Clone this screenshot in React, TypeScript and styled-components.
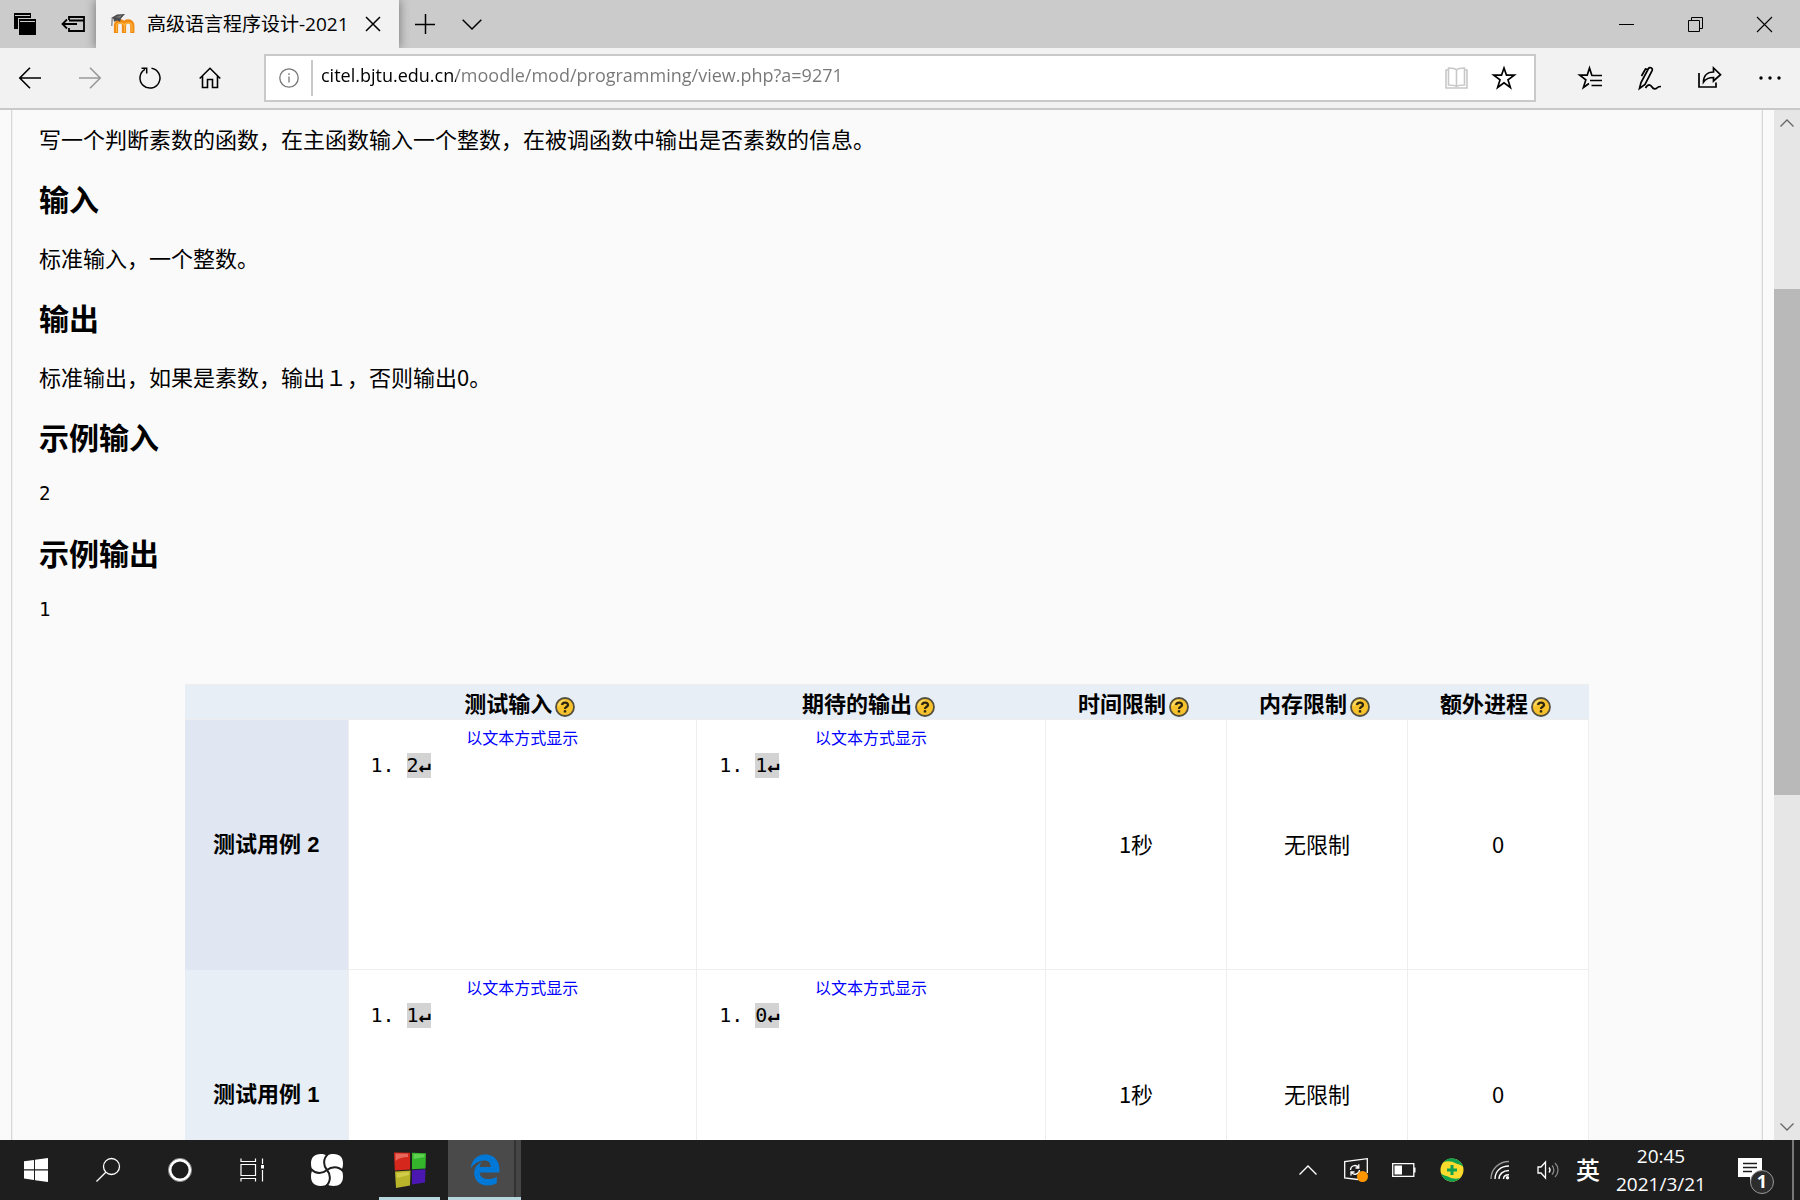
import React from 'react';
import styled, { createGlobalStyle } from 'styled-components';
import { FaEdgeLegacy } from 'react-icons/fa';

const uiFont = '"Open Sans", "Noto Sans CJK SC", sans-serif';
const textFont = '"Noto Sans CJK SC", sans-serif';
const headFont = '"Liberation Sans", "Noto Sans CJK SC", sans-serif';
const monoFont = '"DejaVu Sans Mono", "Noto Sans CJK SC", monospace';

const GlobalStyle = createGlobalStyle`
  * { box-sizing: border-box; }
  body { margin: 0; background: #fafafa; }
  button { border: 0; padding: 0; background: none; color: inherit; font: inherit; cursor: pointer; }
  svg { display: block; flex: none; overflow: visible; }
`;

const Screen = styled.div`
  display: flex;
  flex-direction: column;
  height: 100vh;
  overflow: hidden;
  font-family: ${uiFont};
  color: #000;
`;

/* ---------- tab strip ---------- */

const TabStrip = styled.header`
  display: flex;
  flex: none;
  height: 48px;
  background: #cbcbcb;
  overflow: hidden;
`;

const StripButton = styled.button<{ $width: number }>`
  display: flex;
  align-items: center;
  justify-content: center;
  width: ${(p) => p.$width}px;
  height: 48px;
`;

const Tab = styled.div`
  display: flex;
  align-items: center;
  width: 303px;
  height: 48px;
  padding: 0 12px 0 15px;
  gap: 12px;
  background: #f2f2f2;
  box-shadow: 0 0 10px rgba(0, 0, 0, 0.45);
`;

const TabTitle = styled.span`
  flex: 1;
  min-width: 0;
  overflow: hidden;
  white-space: nowrap;
  font-size: 19px;
  line-height: 28px;
`;

const CloseTab = styled.button`
  display: flex;
  align-items: center;
  justify-content: center;
  width: 28px;
  height: 28px;
  margin-left: -12px;
`;

const WindowButtons = styled.div`
  display: flex;
  margin-left: auto;
  padding-right: 1px;
`;

/* ---------- address toolbar ---------- */

const Toolbar = styled.nav`
  display: flex;
  flex: none;
  align-items: center;
  height: 62px;
  background: #f2f2f2;
  border-bottom: 2px solid #c9c9c9;
`;

const ToolButton = styled.button<{ $dim?: boolean }>`
  display: flex;
  align-items: center;
  justify-content: center;
  width: 60px;
  height: 60px;
  color: ${(p) => (p.$dim ? '#999' : '#000')};
`;

const AddressBar = styled.form`
  display: flex;
  flex: 1;
  align-items: center;
  height: 48px;
  margin: 0 24px;
  padding-right: 6px;
  background: #fff;
  border: 2px solid #c9c9c9;
`;

const SiteInfo = styled.button`
  display: flex;
  align-items: center;
  justify-content: center;
  width: 47px;
  height: 36px;
  color: #777;
  border-right: 2px solid #c9c9c9;
`;

const AddressInput = styled.input`
  flex: 1;
  min-width: 0;
  height: 36px;
  margin: 0 0 6px;
  padding: 0 8px;
  border: 0;
  outline: 0;
  font-family: ${uiFont};
  font-size: 18px;
  color: #767676;
  background: linear-gradient(90deg, #000 143px, #767676 143px);
  background-clip: text;
  -webkit-background-clip: text;
  -webkit-text-fill-color: transparent;
`;

const AddressButton = styled.button<{ $dim?: boolean }>`
  display: flex;
  align-items: center;
  justify-content: center;
  width: 48px;
  height: 44px;
  color: ${(p) => (p.$dim ? '#c8c8c8' : '#000')};
`;

/* ---------- page ---------- */

const Viewport = styled.div`
  display: flex;
  flex: 1;
  min-height: 0;
  background: #fafafa;
`;

const Page = styled.main`
  flex: 1;
  min-width: 0;
  margin: 0 11px;
  border: solid #d8d8d8;
  border-width: 0 1px;
  box-shadow: inset 1px 0 #f0f0f0, inset -1px 0 #f0f0f0;
  overflow: hidden;
`;

const Problem = styled.article`
  padding: 13px 27px 0;
  font-family: ${textFont};
`;

const Paragraph = styled.p`
  margin: 0;
  font-size: 22px;
  line-height: 30px;
`;

const Heading = styled.h2`
  margin: 25px 0 24px;
  font-size: 30px;
  line-height: 40px;
  font-weight: 700;
`;

const Sample = styled.pre`
  margin: 0;
  font-family: ${monoFont};
  font-size: 19px;
  line-height: 27px;
`;

const TableArea = styled.section`
  padding: 61px 173px 0;
`;

const CaseTable = styled.table`
  width: 100%;
  table-layout: fixed;
  border-collapse: collapse;
  font-family: ${textFont};
  font-size: 22px;
  line-height: 30px;
`;

const Col = styled.col<{ $width?: number }>`
  width: ${(p) => (p.$width ? `${p.$width}px` : 'auto')};
`;

const ColumnHead = styled.th`
  height: 35px;
  padding: 0 5px 0 0;
  background: #e7eef6;
  border-top: 1px solid #eee;
  border-bottom: 1px solid #eee;
  white-space: nowrap;
`;

const HeadContent = styled.div`
  display: flex;
  align-items: flex-end;
  justify-content: center;
  gap: 3px;
`;

const HelpButton = styled.button`
  width: 20px;
  height: 20px;
`;

const CaseRow = styled.tr`
  height: 250px;
`;

const CaseName = styled.th<{ $shade: string }>`
  padding: 0;
  background: ${(p) => p.$shade};
  font-family: ${headFont};
`;

const Cell = styled.td`
  padding: 0 0 4px;
  background: #fff;
  border: 1px solid #eee;
  text-align: center;
`;

const DataCell = styled(Cell)`
  padding-top: 7px;
  vertical-align: top;
  font-size: 16px;
  line-height: 20px;
`;

const TextLink = styled.a`
  color: #00f;
  text-decoration: none;
`;

const Lines = styled.ol`
  margin: 6px 0 0;
  padding-left: 58px;
  text-align: left;
  font-family: ${monoFont};
  font-size: 20px;
  line-height: 25px;
`;

const Line = styled.span`
  display: inline-block;
  background: #d3d3d3;
`;

const LineEnd = styled.b`
  font-weight: 700;
`;

/* ---------- scroll bar ---------- */

const ScrollBar = styled.div`
  display: flex;
  flex: none;
  flex-direction: column;
  width: 26px;
  background: #e6e6e6;
`;

const ScrollArrow = styled.button`
  display: flex;
  flex: none;
  align-items: center;
  justify-content: center;
  width: 26px;
  height: 26px;
`;

const Track = styled.div<{ $share: number; $thumb?: boolean }>`
  flex: ${(p) => p.$share} 0 0;
  background: ${(p) => (p.$thumb ? '#b9b9b9' : 'transparent')};
`;

/* ---------- task bar ---------- */

const TaskBar = styled.footer`
  display: flex;
  flex: none;
  height: 60px;
  background: #1e1e1e;
  color: #fff;
`;

const TaskButton = styled.button<{ $width: number }>`
  display: flex;
  align-items: center;
  justify-content: center;
  width: ${(p) => p.$width}px;
  height: 60px;
`;

const RunningApp = styled(TaskButton)`
  margin-left: 13px;
  margin-right: 8px;
  border-bottom: 3px solid #b5d6dd;
  padding-top: 3px;
`;

const ActiveApp = styled(TaskButton)`
  padding-top: 3px;
  color: #0078d7;
  background: linear-gradient(90deg, #4a4a4a 66px, #333 66px, #333 68px, #454545 68px);
  border-bottom: 3px solid #b5d6dd;
`;

const Tray = styled.div`
  display: flex;
  margin-left: auto;
`;

const InputLanguage = styled(TaskButton)`
  padding-bottom: 4px;
  font-size: 24px;
  font-weight: 500;
`;

const Clock = styled.button`
  width: 114px;
  height: 60px;
  font-size: 19px;
  line-height: 28px;
`;

const ClockLine = styled.time`
  display: block;
`;

const Notifications = styled.button`
  position: relative;
  display: flex;
  align-items: center;
  justify-content: center;
  width: 64px;
  height: 60px;
`;

const Badge = styled.span`
  position: absolute;
  right: 8px;
  bottom: 6px;
  width: 24px;
  height: 24px;
  border: 1px solid #999;
  border-radius: 50%;
  background: #2d2d2d;
  font-size: 18px;
  font-weight: 700;
  line-height: 20px;
  text-align: center;
`;

const ShowDesktop = styled.button`
  width: 8px;
  height: 60px;
  margin-left: 10px;
  border-left: 2px solid #777;
`;

/* ---------- drawings ---------- */

type DrawProps = { w?: number; h?: number; sw?: number; children: React.ReactNode };

const Draw = ({ w = 24, h = 24, sw = 2, children }: DrawProps) => (
  <svg width={w} height={h} viewBox={`0 0 ${w} ${h}`} fill="none" stroke="currentColor" strokeWidth={sw} aria-hidden="true">
    {children}
  </svg>
);

const TabsAside = () => (
  <Draw w={22} h={22} sw={0}>
    <path d="M0 0H17V16H0Z" fill="#000" />
    <path d="M1 2.500H16" stroke="#cbcbcb" strokeWidth="1" />
    <path d="M4 5H23V22H4Z" fill="#cbcbcb" />
    <path d="M0 0H17V5H4V16H0Z" fill="#000" />
    <path d="M5 6H22V22H5Z" fill="#000" />
    <path d="M1 2.500H16M6 8.500H21" stroke="#cbcbcb" strokeWidth="1" />
  </Draw>
);

const SetAside = () => (
  <Draw w={24} h={18} sw={1.8}>
    <path d="M8 5V2H23V16H8V13M8 5.500H23" />
    <path d="M1 9H16M6 4.500L1.500 9L6 13.500" />
  </Draw>
);

const MoodleMark = () => (
  <svg width="24" height="20" viewBox="0 0 24 20" fill="none" aria-hidden="true">
    <path d="M5 19V11C5 6.200 13 6.200 13 11V19M13 11C13 6.200 21.300 6.200 21.300 11V19" stroke="#f08c12" strokeWidth="4.200" />
    <path d="M5.500 18V11.500C5.500 8 12 8 13 11M13.500 18V11.500C14 8 20.500 8 21 11.500V18" stroke="#ffb43c" strokeWidth="1.200" />
    <path d="M0 4L6 0.500L14 0L10 4.500L9 8C7 6 4.500 6.500 3 8L2.500 5Z" fill="#4c4c4c" />
    <path d="M4 3L11 1L9 4Z" fill="#777" />
    <path d="M1.200 4.500L0.800 12" stroke="#777" strokeWidth="1.200" />
  </svg>
);

const Cross = () => (
  <Draw w={16} h={16} sw={1.5}>
    <path d="M1 1L15 15M15 1L1 15" />
  </Draw>
);

const Plus = () => (
  <Draw w={20} h={20} sw={1.5}>
    <path d="M0 10.500H20M10.500 0V20" />
  </Draw>
);

const ChevronDown = () => (
  <Draw w={20} h={11} sw={1.5}>
    <path d="M0.700 0.700L10 10L19.300 0.700" />
  </Draw>
);

const Minimize = () => (
  <Draw w={15} h={15} sw={1}>
    <path d="M0 7.500H15" />
  </Draw>
);

const Restore = () => (
  <Draw w={15} h={15} sw={1}>
    <path d="M0.500 3.500H11.500V14.500H0.500ZM3.500 3.500V0.500H14.500V11.500H11.500" />
  </Draw>
);

const WindowClose = () => (
  <Draw w={15} h={15} sw={1.1}>
    <path d="M0 0L15 15M15 0L0 15" />
  </Draw>
);

const Back = () => (
  <Draw w={22} h={22} sw={1.6}>
    <path d="M22 11H1M11 0.800L0.800 11L11 21.200" />
  </Draw>
);

const Forward = () => (
  <Draw w={22} h={22} sw={1.6}>
    <path d="M0 11H21M11 0.800L21.200 11L11 21.200" />
  </Draw>
);

const Refresh = () => (
  <Draw w={22} h={22} sw={1.5}>
    <path d="M12.500 1.200A10 10 0 1 1 6 2.400M2.500 1.200H7.700V6.500" />
  </Draw>
);

const Home = () => (
  <Draw w={22} h={22} sw={1.6}>
    <path d="M0.700 11.500L11 1.300L21.300 11.500M3.500 9V20.500H8.500V12.500H13.500V20.500H18.500V9" />
  </Draw>
);

const Info = () => (
  <Draw w={20} h={20} sw={1.3}>
    <circle cx="10" cy="10" r="9.200" />
    <path d="M10 8.500V14.500M10 5.300V7" />
  </Draw>
);

const Book = () => (
  <Draw w={23} h={22} sw={1.6}>
    <path d="M11.500 3C10 1 6 1 3.500 1V18C6 18 10 18 11.500 19.500C13 18 17 18 19.500 18V1C17 1 13 1 11.500 3V19.500" />
    <path d="M3.500 3H1V21H22V3H19.500" />
  </Draw>
);

const Star = () => (
  <Draw w={24} h={24} sw={1.7}>
    <path d="M12 2L14.500 9.200H22.300L16 13.900L18.400 21.500L12 16.900L5.600 21.500L8 13.900L1.700 9.200H9.500Z" />
  </Draw>
);

const Hub = () => (
  <Draw w={24} h={24} sw={1.7}>
    <path d="M14 9.200H13.800L11.500 2L9.200 9.200H1.700L7.800 13.900L5.400 21.500L11 17.500M13.500 9.500H24M12 14.500H24M13.500 19.500H24" />
  </Draw>
);

const Pen = () => (
  <Draw w={24} h={24} sw={1.7}>
    <path d="M1.500 22.500L3 16.500L10.500 2.500C11.500 0.500 15 2 14.200 4.300L7 18.500L1.500 22.500ZM10 3.500L7.500 3L3.500 10" />
    <path d="M7.500 22C10 17.500 12.500 18.500 14 21C15.500 23.500 18 23.500 19.500 21.500C20.500 20.500 22 20.500 23 20.500" />
  </Draw>
);

const Share = () => (
  <Draw w={24} h={24} sw={1.7}>
    <path d="M1 7V21H18V16.500" />
    <path d="M5.500 16C5.500 10 9 6 15.500 6V2L22.500 8.700L15.500 15V11.500C11 11.500 8 12.500 5.500 16Z" />
  </Draw>
);

const More = () => (
  <Draw w={22} h={4} sw={0}>
    <circle cx="2" cy="2" r="1.700" fill="#000" />
    <circle cx="11" cy="2" r="1.700" fill="#000" />
    <circle cx="20" cy="2" r="1.700" fill="#000" />
  </Draw>
);

const HelpMark = () => (
  <svg width="20" height="20" viewBox="0 0 20 20" fill="none" aria-hidden="true">
    <circle cx="10" cy="10" r="9" fill="#f8c22c" stroke="#54503f" strokeWidth="1.800" />
    <path d="M3.500 9A6.500 6.500 0 0 1 10 3.300" stroke="#ffe27a" strokeWidth="1.300" />
    <path d="M7.200 8C7.200 4.800 13 4.800 13 8C13 10 10 9.700 10 12" stroke="#2c2610" strokeWidth="2.300" />
    <path d="M8.800 13.200H11.200V15.500H8.800Z" fill="#2c2610" />
  </svg>
);

const ScrollChevron = ({ down = false }: { down?: boolean }) => (
  <Draw w={14} h={8} sw={1.3}>
    <path d={down ? 'M0.500 0.500L7 7L13.500 0.500' : 'M0.500 7.500L7 1L13.500 7.500'} stroke="#666" />
  </Draw>
);

const WindowsLogo = () => (
  <Draw w={24} h={24} sw={0}>
    <path d="M0 3.300L10 2V11.300H0ZM11 1.800L24 0V11.300H11ZM0 12.400H10V21.900L0 20.600ZM11 12.400H24V24L11 22.200Z" fill="#fff" />
  </Draw>
);

const Search = () => (
  <Draw w={24} h={24} sw={1.3}>
    <circle cx="15.500" cy="8.500" r="8" />
    <path d="M9.800 14.200L0.500 23.500" />
  </Draw>
);

const Cortana = () => (
  <Draw w={24} h={24}>
    <circle cx="12" cy="12" r="10" strokeWidth="2.800" />
    <circle cx="12" cy="12" r="11.600" strokeWidth="1" stroke="#888" />
  </Draw>
);

const TaskView = () => (
  <Draw w={24} h={24} sw={1.2}>
    <path d="M1 0.500V3.500H15.500V0.500M1 6.500H15.500V17.500H1ZM1 23.500V20.500H15.500V23.500M22.500 0.500V6M22.500 12V23.500" />
    <path d="M21 7H24V10.500H21Z" fill="#fff" strokeWidth="0" />
  </Draw>
);

const Swirl = () => (
  <Draw w={32} h={32} sw={0}>
    <path d="M9.500 0C12.500 0 14.500 0.500 16 1.800C17.500 0.500 19.500 0 22.500 0C29 0 32 3.500 32 9.500C32 12.500 31.500 14.500 30.300 16C31.500 17.500 32 19.500 32 22.500C32 29 28.500 32 22.500 32C19.500 32 17.500 31.500 16 30.300C14.500 31.500 12.500 32 9.500 32C3.500 32 0 28.500 0 22.500C0 19.500 0.500 17.500 1.800 16C0.500 14.500 0 12.500 0 9.500C0 3.500 3.500 0 9.500 0Z" fill="#fff" />
    <path
      d="M17 0C11.500 5 12.500 12 16 16M32 17C27 11.500 20 12.500 16 16M15 32C20.500 27 19.500 20 16 16M0 15C5 20.500 12 19.500 16 16"
      stroke="#1e1e1e"
      strokeWidth="2"
    />
  </Draw>
);

const CodeBlocks = () => (
  <Draw w={32} h={36} sw={0}>
    <path d="M0 0.500L16 0.800V17.500L0.800 18.500Z" fill="#d5271c" />
    <path d="M1.500 1.500L14 1.800V5C9 5 5 6 1.500 9Z" fill="#e8685c" />
    <path d="M18 0.800L32 1.200L31.500 16.500L18 17.300Z" fill="#35b52c" />
    <path d="M19.500 2L30.500 2.300V5L19.500 7Z" fill="#60d050" />
    <path d="M1 19.500L16.500 18.500L16 33.500L2 36Z" fill="#b9b52a" />
    <path d="M2.500 21L15 20V23L3 26Z" fill="#d0cc4a" />
    <path d="M18 18.300L31.500 17.300L31 30.500L18 32.500Z" fill="#4a18b0" />
  </Draw>
);

const TrayUp = () => (
  <Draw w={18} h={10} sw={1.4}>
    <path d="M0.500 9.500L9 1L17.500 9.500" />
  </Draw>
);

const UpdateIcon = () => (
  <Draw w={24} h={24} sw={1.3}>
    <path d="M14 21.500L0.700 20V3.500L23.300 0.700V15" />
    <path d="M6.500 12C6.500 7.500 12 6 14.500 9.500M14.800 6.300V10H11.500M15.500 12C15 16.500 9.500 17.500 7.500 14.500M7 17.500V14H10.500" />
    <circle cx="18.500" cy="18.500" r="5.500" fill="#ff9500" stroke="none" />
  </Draw>
);

const Battery = () => (
  <Draw w={24} h={14} sw={1.3}>
    <path d="M0.700 0.700H21.800V13.300H0.700Z" />
    <path d="M2.500 2.500H10V11.500H2.500ZM22 4.500H23.500V9.500H22Z" fill="#fff" strokeWidth="0" />
  </Draw>
);

const Guard = () => (
  <Draw w={24} h={24} sw={0}>
    <circle cx="12" cy="12" r="11.500" fill="#fbdc2e" />
    <path d="M3.500 4.200A11.500 11.500 0 0 1 23 8.500C20 6.500 18.500 6 16 5.500C12 3 7 2.800 3.500 4.200Z" fill="#0fa050" />
    <path d="M20.500 19.800A11.500 11.500 0 0 1 1 15.500C4 17.500 5.500 18 8 18.500C12 21 17 21.200 20.500 19.800Z" fill="#0fa050" />
    <path d="M10.500 7H13.500V10.500H17V13.500H13.500V17H10.500V13.500H7V10.500H10.500Z" fill="#0fa050" />
  </Draw>
);

const Wifi = () => (
  <Draw w={20} h={20} sw={1.4}>
    <path d="M1 19C1 9 9 1.500 19 1.500" stroke="#999" />
    <path d="M5 19C5 11 11 6 19 6M9 19C9 14 13 10.500 19 10.500M13.500 19C13.500 16.500 15.500 14.800 19 14.800" />
    <circle cx="17.500" cy="17.800" r="1.700" fill="#fff" stroke="none" />
  </Draw>
);

const Speaker = () => (
  <Draw w={22} h={18} sw={1.3}>
    <path d="M1 6H4L8.500 1V17L4 12H1Z" />
    <path d="M12 6.500C13.300 8 13.300 10 12 11.500" />
    <path d="M15 4.500C17.500 7 17.500 11 15 13.500M18 2C22 6 22 12 18 16" stroke="#888" />
  </Draw>
);

const Message = () => (
  <Draw w={24} h={24} sw={0}>
    <path d="M0 0H24V19H17L12 24V19H0Z" fill="#fff" />
    <path d="M5 5.500H19M5 9.500H19M5 13.500H14" stroke="#1e1e1e" strokeWidth="1.300" />
  </Draw>
);

/* ---------- data ---------- */

const columns = ['测试输入', '期待的输出', '时间限制', '内存限制', '额外进程'];

const cases = [
  { name: '测试用例 2', shade: '#e0e7f3', input: '2', output: '1', time: '1秒', memory: '无限制', processes: '0' },
  { name: '测试用例 1', shade: '#e7eef6', input: '1', output: '0', time: '1秒', memory: '无限制', processes: '0' },
];

const CaseData = ({ value }: { value: string }) => (
  <DataCell>
    <TextLink href="#text">以文本方式显示</TextLink>
    <Lines>
      <li>
        <Line>
          {value}
          <LineEnd>↵</LineEnd>
        </Line>
      </li>
    </Lines>
  </DataCell>
);

export default function App() {
  return (
    <Screen>
      <GlobalStyle />
      <TabStrip>
        <StripButton $width={50} aria-label="已搁置的标签页"><TabsAside /></StripButton>
        <StripButton $width={46} aria-label="搁置标签页"><SetAside /></StripButton>
        <Tab>
          <MoodleMark />
          <TabTitle>高级语言程序设计-2021</TabTitle>
          <CloseTab aria-label="关闭标签页"><Cross /></CloseTab>
        </Tab>
        <StripButton $width={52} aria-label="新建标签页"><Plus /></StripButton>
        <StripButton $width={42} aria-label="标签页预览"><ChevronDown /></StripButton>
        <WindowButtons>
          <StripButton $width={69} aria-label="最小化"><Minimize /></StripButton>
          <StripButton $width={69} aria-label="还原"><Restore /></StripButton>
          <StripButton $width={69} aria-label="关闭"><WindowClose /></StripButton>
        </WindowButtons>
      </TabStrip>

      <Toolbar>
        <ToolButton aria-label="后退"><Back /></ToolButton>
        <ToolButton $dim aria-label="前进"><Forward /></ToolButton>
        <ToolButton aria-label="刷新"><Refresh /></ToolButton>
        <ToolButton aria-label="主页"><Home /></ToolButton>
        <AddressBar onSubmit={(e) => e.preventDefault()}>
          <SiteInfo type="button" aria-label="网站信息"><Info /></SiteInfo>
          <AddressInput
            type="text"
            aria-label="地址"
            spellCheck={false}
            defaultValue="citel.bjtu.edu.cn/moodle/mod/programming/view.php?a=9271"
          />
          <AddressButton type="button" $dim aria-label="阅读视图"><Book /></AddressButton>
          <AddressButton type="button" aria-label="收藏"><Star /></AddressButton>
        </AddressBar>
        <ToolButton aria-label="中心"><Hub /></ToolButton>
        <ToolButton aria-label="添加笔记"><Pen /></ToolButton>
        <ToolButton aria-label="共享"><Share /></ToolButton>
        <ToolButton aria-label="更多"><More /></ToolButton>
      </Toolbar>

      <Viewport>
        <Page>
          <Problem>
            <Paragraph>写一个判断素数的函数，在主函数输入一个整数，在被调函数中输出是否素数的信息。</Paragraph>
            <Heading>输入</Heading>
            <Paragraph>标准输入，一个整数。</Paragraph>
            <Heading>输出</Heading>
            <Paragraph>标准输出，如果是素数，输出１，否则输出0。</Paragraph>
            <Heading>示例输入</Heading>
            <Sample>2</Sample>
            <Heading>示例输出</Heading>
            <Sample>1</Sample>
          </Problem>
          <TableArea>
            <CaseTable>
              <colgroup>
                <Col $width={163} />
                <Col />
                <Col />
                <Col $width={181} />
                <Col $width={181} />
                <Col $width={181} />
              </colgroup>
              <thead>
                <tr>
                  <ColumnHead />
                  {columns.map((label) => (
                    <ColumnHead key={label} scope="col">
                      <HeadContent>
                        {label}
                        <HelpButton aria-label={`${label} 帮助`}><HelpMark /></HelpButton>
                      </HeadContent>
                    </ColumnHead>
                  ))}
                </tr>
              </thead>
              <tbody>
                {cases.map((c) => (
                  <CaseRow key={c.name}>
                    <CaseName scope="row" $shade={c.shade}>{c.name}</CaseName>
                    <CaseData value={c.input} />
                    <CaseData value={c.output} />
                    <Cell>{c.time}</Cell>
                    <Cell>{c.memory}</Cell>
                    <Cell>{c.processes}</Cell>
                  </CaseRow>
                ))}
              </tbody>
            </CaseTable>
          </TableArea>
        </Page>
        <ScrollBar>
          <ScrollArrow aria-label="向上滚动"><ScrollChevron /></ScrollArrow>
          <Track $share={153} />
          <Track $share={506} $thumb />
          <Track $share={319} />
          <ScrollArrow aria-label="向下滚动"><ScrollChevron down /></ScrollArrow>
        </ScrollBar>
      </Viewport>

      <TaskBar>
        <TaskButton $width={72} aria-label="开始"><WindowsLogo /></TaskButton>
        <TaskButton $width={72} aria-label="搜索"><Search /></TaskButton>
        <TaskButton $width={72} aria-label="Cortana"><Cortana /></TaskButton>
        <TaskButton $width={72} aria-label="任务视图"><TaskView /></TaskButton>
        <TaskButton $width={78} aria-label="应用"><Swirl /></TaskButton>
        <RunningApp $width={61} aria-label="Code::Blocks"><CodeBlocks /></RunningApp>
        <ActiveApp $width={73} aria-label="Microsoft Edge"><FaEdgeLegacy size={32} /></ActiveApp>
        <Tray>
          <TaskButton $width={48} aria-label="显示隐藏的图标"><TrayUp /></TaskButton>
          <TaskButton $width={48} aria-label="更新"><UpdateIcon /></TaskButton>
          <TaskButton $width={48} aria-label="电池"><Battery /></TaskButton>
          <TaskButton $width={48} aria-label="安全卫士"><Guard /></TaskButton>
          <TaskButton $width={48} aria-label="网络"><Wifi /></TaskButton>
          <TaskButton $width={48} aria-label="音量"><Speaker /></TaskButton>
          <InputLanguage $width={32}>英</InputLanguage>
          <Clock>
            <ClockLine>20:45</ClockLine>
            <ClockLine>2021/3/21</ClockLine>
          </Clock>
          <Notifications aria-label="通知">
            <Message />
            <Badge>1</Badge>
          </Notifications>
          <ShowDesktop aria-label="显示桌面" />
        </Tray>
      </TaskBar>
    </Screen>
  );
}
